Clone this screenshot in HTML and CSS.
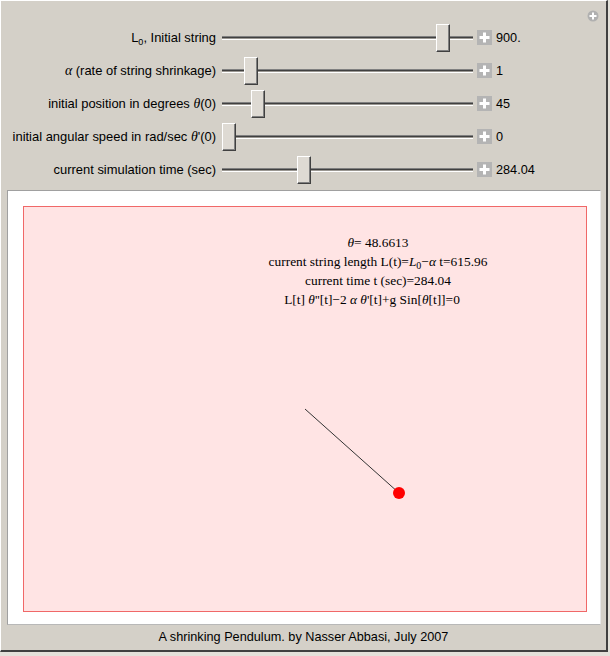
FILE: index.html
```html
<!DOCTYPE html>
<html>
<head>
<meta charset="utf-8">
<link rel="stylesheet" href="styles.css">
</head>
<body>
<div class="frame">
  <span class="corner-btn"><svg width="12" height="12" viewBox="0 0 12 12"><circle cx="6" cy="6" r="5.5" fill="#b0b0b0"/><rect x="5" y="2.5" width="2" height="7" fill="#fff"/><rect x="2.5" y="5" width="7" height="2" fill="#fff"/></svg></span>
  <div class="controls">
    <div class="row">
      <div class="label">L<sub>0</sub>, Initial string</div>
      <div class="slider"><div class="track"></div><div class="thumb" style="left:214px"></div></div>
      <span class="plus"><svg width="15" height="15" viewBox="0 0 15 15"><rect width="15" height="15" fill="#b4b4b4"/><rect x="6" y="2.5" width="3" height="10" fill="#fff"/><rect x="2.5" y="6" width="10" height="3" fill="#fff"/></svg></span>
      <span class="value">900.</span>
    </div>
    <div class="row">
      <div class="label"><i class="sym">α</i> (rate of string shrinkage)</div>
      <div class="slider"><div class="track"></div><div class="thumb" style="left:22px"></div></div>
      <span class="plus"><svg width="15" height="15" viewBox="0 0 15 15"><rect width="15" height="15" fill="#b4b4b4"/><rect x="6" y="2.5" width="3" height="10" fill="#fff"/><rect x="2.5" y="6" width="10" height="3" fill="#fff"/></svg></span>
      <span class="value">1</span>
    </div>
    <div class="row">
      <div class="label">initial position in degrees <i class="sym">θ</i>(0)</div>
      <div class="slider"><div class="track"></div><div class="thumb" style="left:29px"></div></div>
      <span class="plus"><svg width="15" height="15" viewBox="0 0 15 15"><rect width="15" height="15" fill="#b4b4b4"/><rect x="6" y="2.5" width="3" height="10" fill="#fff"/><rect x="2.5" y="6" width="10" height="3" fill="#fff"/></svg></span>
      <span class="value">45</span>
    </div>
    <div class="row">
      <div class="label">initial angular speed in rad/sec <i class="sym">θ</i>'(0)</div>
      <div class="slider"><div class="track"></div><div class="thumb" style="left:0px"></div></div>
      <span class="plus"><svg width="15" height="15" viewBox="0 0 15 15"><rect width="15" height="15" fill="#b4b4b4"/><rect x="6" y="2.5" width="3" height="10" fill="#fff"/><rect x="2.5" y="6" width="10" height="3" fill="#fff"/></svg></span>
      <span class="value">0</span>
    </div>
    <div class="row">
      <div class="label">current simulation time (sec)</div>
      <div class="slider"><div class="track"></div><div class="thumb" style="left:75px"></div></div>
      <span class="plus"><svg width="15" height="15" viewBox="0 0 15 15"><rect width="15" height="15" fill="#b4b4b4"/><rect x="6" y="2.5" width="3" height="10" fill="#fff"/><rect x="2.5" y="6" width="10" height="3" fill="#fff"/></svg></span>
      <span class="value">284.04</span>
    </div>
  </div>
  <div class="panel">
    <div class="canvas">
      <div class="readout">
        <div><i>θ</i>= 48.6613</div>
        <div>current string length L(t)=<i>L</i><sub>0</sub>−<i>α</i> t=615.96</div>
        <div>current time t (sec)=284.04</div>
        <div class="eq">L[t] <i>θ</i>''[t]−2 <i>α</i> <i>θ</i>'[t]+g Sin[<i>θ</i>[t]]=0</div>
      </div>
      <svg class="pendulum" width="562" height="404" viewBox="0 0 562 404">
        <line x1="281" y1="202" x2="375" y2="286" stroke="#333" stroke-width="1"/>
        <circle cx="375" cy="286" r="6" fill="#ff0000"/>
      </svg>
    </div>
  </div>
  <div class="caption">A shrinking Pendulum. by Nasser Abbasi, July 2007</div>
</div>
</body>
</html>
```
FILE: styles.css
```css
html, body {
  margin: 0;
  padding: 0;
  background: #e4e1da;
}
.frame {
  position: relative;
  box-sizing: border-box;
  width: 608px;
  height: 652px;
  background: #d4d0c8;
  border-top: 1px solid #fff;
  border-left: 1px solid #fff;
  border-right: 2px solid #404040;
  border-bottom: 2px solid #404040;
  font-family: "Liberation Sans", Arial, sans-serif;
  font-size: 12.7px;
  color: #000;
}
.corner-btn {
  position: absolute;
  left: 586px;
  top: 9px;
  width: 12px;
  height: 12px;
  display: block;
}
.corner-btn svg { display: block; }
.controls {
  padding-top: 20px;
}
.row {
  height: 33px;
  display: flex;
  align-items: center;
}
.label {
  width: 215px;
  text-align: right;
  white-space: nowrap;
  font-size: 12.95px;
}
.label sub {
  font-size: 9px;
  vertical-align: -3px;
  line-height: 0;
}
.sym {
  font-family: "Liberation Serif", serif;
  font-size: 13.8px;
}
.slider {
  position: relative;
  width: 251px;
  height: 28px;
  margin-left: 6px;
  display: flex;
  align-items: center;
}
.track {
  width: 100%;
  height: 4px;
  background: linear-gradient(#808080 0 1px, #404040 1px 2px, #9a9792 2px 3px, #ffffff 3px 4px);
}
.thumb {
  position: absolute;
  top: 0;
  box-sizing: border-box;
  width: 14px;
  height: 28px;
  background: #dedad3;
  border-top: 1px solid #fff;
  border-left: 1px solid #fff;
  border-right: 1px solid #404040;
  border-bottom: 1px solid #404040;
  box-shadow: inset -1px -1px 0 #808080;
}
.plus {
  margin-left: 4px;
  width: 15px;
  height: 15px;
}
.plus svg { display: block; }
.value {
  margin-left: 4px;
}
.panel {
  margin: 4px 5px 0 6px;
  background: #fff;
  border-top: 1px solid #a0a0a0;
  border-left: 1px solid #a0a0a0;
  border-right: 1px solid #e8e8e8;
  border-bottom: 1px solid #b8b8b8;
  padding: 15px 14px 12px 15px;
}
.canvas {
  position: relative;
  box-sizing: border-box;
  width: 564px;
  height: 406px;
  background: #ffe4e4;
  border: 1px solid #f06868;
  padding-top: 26px;
}
.readout {
  width: 280px;
  margin-left: 214px;
  text-align: center;
  font-family: "Liberation Serif", "Times New Roman", serif;
  font-size: 13.4px;
  line-height: 19px;
  color: #000;
}
.readout .eq {
  padding-right: 12px;
}
.readout sub {
  font-size: 10px;
  vertical-align: -3px;
  line-height: 0;
}
.pendulum {
  position: absolute;
  left: 0;
  top: 0;
}
.caption {
  padding-top: 4px;
  line-height: 16px;
  text-align: center;
}
```
